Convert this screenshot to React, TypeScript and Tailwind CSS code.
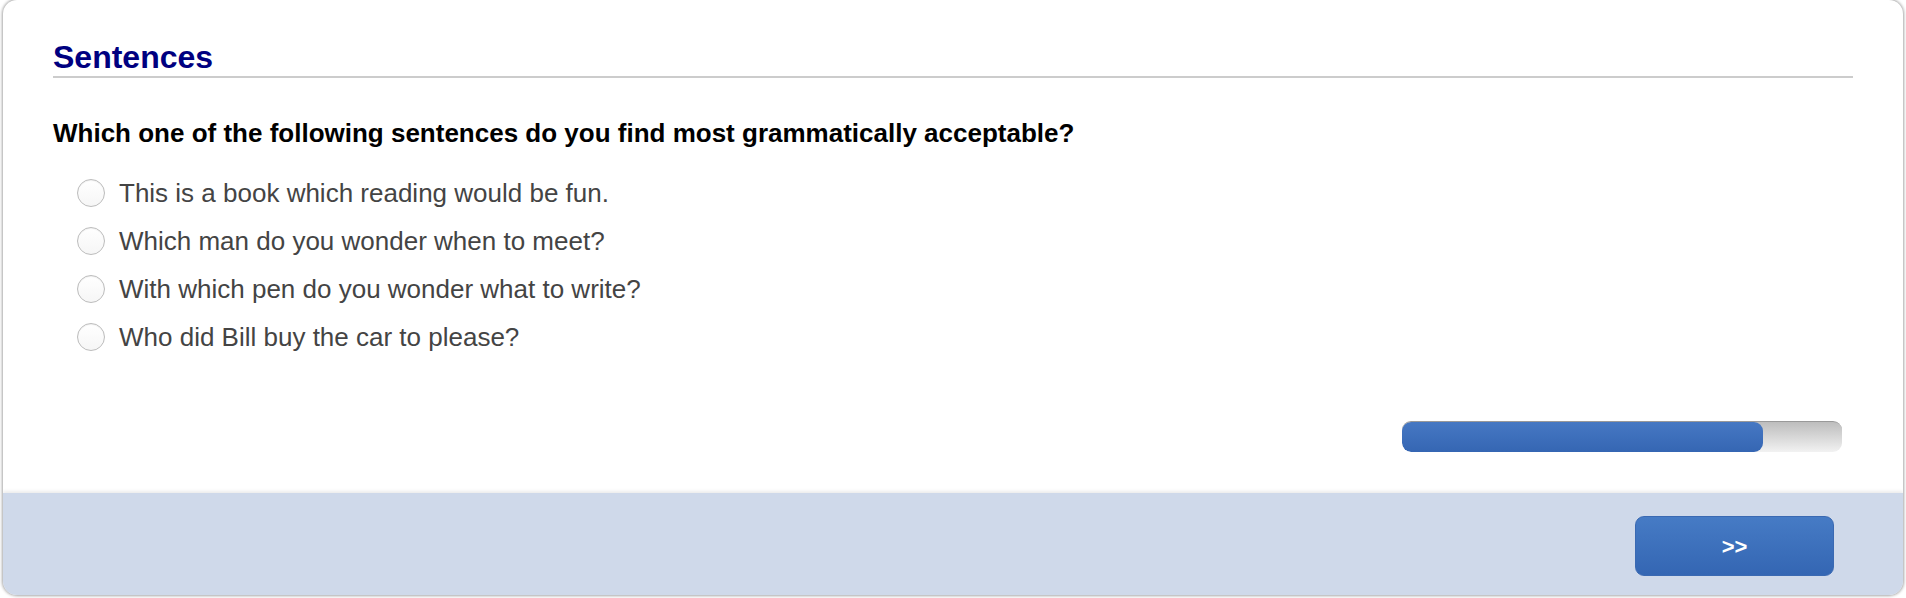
import React from 'react';

const options = [
  'This is a book which reading would be fun.',
  'Which man do you wonder when to meet?',
  'With which pen do you wonder what to write?',
  'Who did Bill buy the car to please?',
];

const progress = 82;

const Radio: React.FC = () => (
  <span className="w-[28px] h-[28px] rounded-full border border-[#bcbcbc] bg-gradient-to-b from-[#ffffff] to-[#f6f6f6] shadow-[inset_0_1px_1px_rgba(0,0,0,0.06)] shrink-0" />
);

export default function App() {
  return (
    <div className="w-full h-[598px] bg-white px-[3px] pb-[3px] font-['Liberation_Sans',Arial,sans-serif]">
      <div className="h-full flex flex-col rounded-[14px] bg-white overflow-hidden shadow-[0_0_3px_1px_rgba(0,0,0,0.35)]">
        {/* question body */}
        <div className="flex-1 flex flex-col px-[50px] pt-[41px]">
          <div className="pb-[3px] border-b-2 border-[#cccccc]">
            <h1 className="text-[32px] leading-[32px] font-bold text-[#000080]">Sentences</h1>
          </div>

          <p className="mt-[40px] text-[26px] leading-[30px] font-bold text-black">
            Which one of the following sentences do you find most grammatically acceptable?
          </p>

          <ul className="mt-[21px]">
            {options.map((opt) => (
              <li key={opt} className="h-[48px] flex items-center gap-[14px] pl-[24px]">
                <Radio />
                <span className="text-[26px] text-[#444444]">{opt}</span>
              </li>
            ))}
          </ul>

          <div className="mt-[60px] flex justify-end pr-[11px]">
            <div className="w-[440px] h-[31px] rounded-[9px] border-t border-[#999999] bg-gradient-to-b from-[#bdbdbd] to-[#f2f2f2] overflow-hidden">
              <div
                className="h-full rounded-[9px] bg-gradient-to-b from-[#4678c3] to-[#3566b3]"
                style={{ width: `${progress}%` }}
              />
            </div>
          </div>
        </div>

        {/* footer */}
        <div className="h-[102px] shrink-0 bg-[#cfd9ea] shadow-[0_-2px_3px_rgba(0,0,0,0.08)] flex justify-end items-start pt-[23px] pr-[69px]">
          <button className="w-[199px] h-[60px] rounded-[9px] border border-[#3a69b2] bg-gradient-to-b from-[#467bc5] to-[#3466b3] text-white text-[22px] font-bold">
            &gt;&gt;
          </button>
        </div>
      </div>
    </div>
  );
}
